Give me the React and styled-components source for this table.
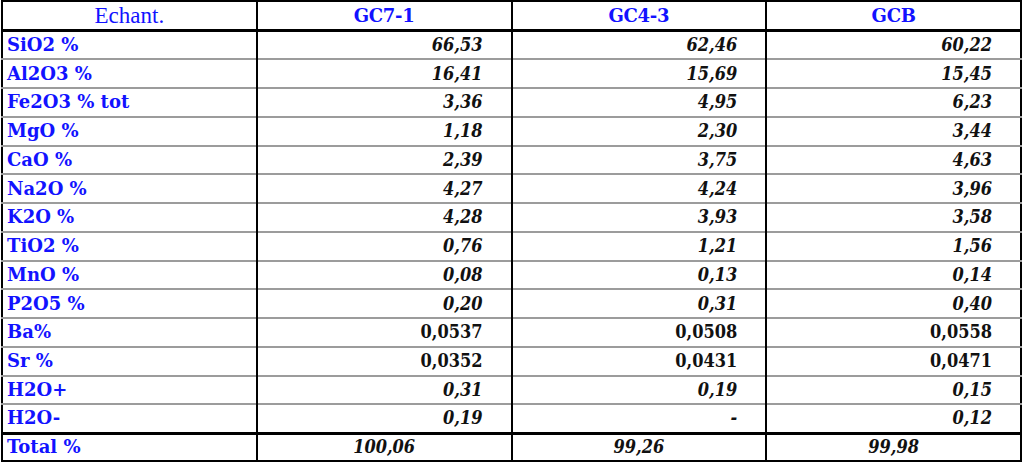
import styled, { createGlobalStyle } from "styled-components";

const GlobalStyle = createGlobalStyle`
  html, body {
    margin: 0;
    padding: 0;
    background: #fff;
  }
  body {
    font-family: "DejaVu Serif", "Liberation Serif", serif;
  }
`;

const rows = [
  { label: "SiO2 %", values: ["66,53", "62,46", "60,22"] },
  { label: "Al2O3 %", values: ["16,41", "15,69", "15,45"] },
  { label: "Fe2O3 % tot", values: ["3,36", "4,95", "6,23"] },
  { label: "MgO %", values: ["1,18", "2,30", "3,44"] },
  { label: "CaO %", values: ["2,39", "3,75", "4,63"] },
  { label: "Na2O %", values: ["4,27", "4,24", "3,96"] },
  { label: "K2O %", values: ["4,28", "3,93", "3,58"] },
  { label: "TiO2 %", values: ["0,76", "1,21", "1,56"] },
  { label: "MnO %", values: ["0,08", "0,13", "0,14"] },
  { label: "P2O5 %", values: ["0,20", "0,31", "0,40"] },
  { label: "Ba%", values: ["0,0537", "0,0508", "0,0558"], upright: true },
  { label: "Sr %", values: ["0,0352", "0,0431", "0,0471"], upright: true },
  { label: "H2O+", values: ["0,31", "0,19", "0,15"] },
  { label: "H2O-", values: ["0,19", "-", "0,12"] },
];

const samples = ["GC7-1", "GC4-3", "GCB"];
const totals = ["100,06", "99,26", "99,98"];

const Table = styled.table`
  width: 1021px;
  margin-left: 1px;
  border-collapse: collapse;
  table-layout: fixed;
  border: 2px solid #000;
`;

const HeadRow = styled.tr`
  height: 29.5px;
  border-bottom: 3px solid #000;
`;

const Row = styled.tr`
  height: 28.75px;
  border-bottom: 2px solid #9c9c9c;

  &:last-child {
    border-bottom: 3px solid #000;
  }
`;

const TotalRow = styled.tr`
  height: 27.5px;
`;

const HeadCell = styled.th`
  padding: 0;
  border-left: 2px solid #000;
  color: #1212ff;
  font-family: ${(p) =>
    p.$light ? '"Liberation Serif", serif' : '"DejaVu Serif", serif'};
  font-size: ${(p) => (p.$light ? "23px" : "18px")};
  font-weight: ${(p) => (p.$light ? 400 : 700)};
  letter-spacing: ${(p) => (p.$light ? "0" : "-0.3px")};
  text-align: center;
  vertical-align: middle;
  line-height: 1;
`;

const Label = styled.td`
  padding: 0 0 0 4px;
  color: #1212ff;
  font-family: "DejaVu Serif", serif;
  font-size: 18px;
  font-weight: 700;
  white-space: nowrap;
  vertical-align: middle;
  line-height: 1;
`;

const Value = styled.td`
  padding: 0 ${(p) => (p.$center ? "0" : "28px")} 0 0;
  border-left: 2px solid #000;
  color: #111;
  font-family: "DejaVu Serif Condensed", "DejaVu Serif", serif;
  font-stretch: condensed;
  font-size: 18px;
  font-weight: 700;
  font-style: ${(p) => (p.$upright ? "normal" : "italic")};
  text-align: ${(p) => (p.$center ? "center" : "right")};
  vertical-align: middle;
  line-height: 1;
`;

export default function App() {
  return (
    <>
      <GlobalStyle />
      <Table>
        <thead>
          <HeadRow>
            <HeadCell $light>Echant.</HeadCell>
            {samples.map((s) => (
              <HeadCell key={s}>{s}</HeadCell>
            ))}
          </HeadRow>
        </thead>
        <tbody>
          {rows.map((r) => (
            <Row key={r.label}>
              <Label>{r.label}</Label>
              {r.values.map((v, i) => (
                <Value key={i} $upright={r.upright}>
                  {v}
                </Value>
              ))}
            </Row>
          ))}
        </tbody>
        <tfoot>
          <TotalRow>
            <Label>Total %</Label>
            {totals.map((t, i) => (
              <Value key={i} $center>
                {t}
              </Value>
            ))}
          </TotalRow>
        </tfoot>
      </Table>
    </>
  );
}
